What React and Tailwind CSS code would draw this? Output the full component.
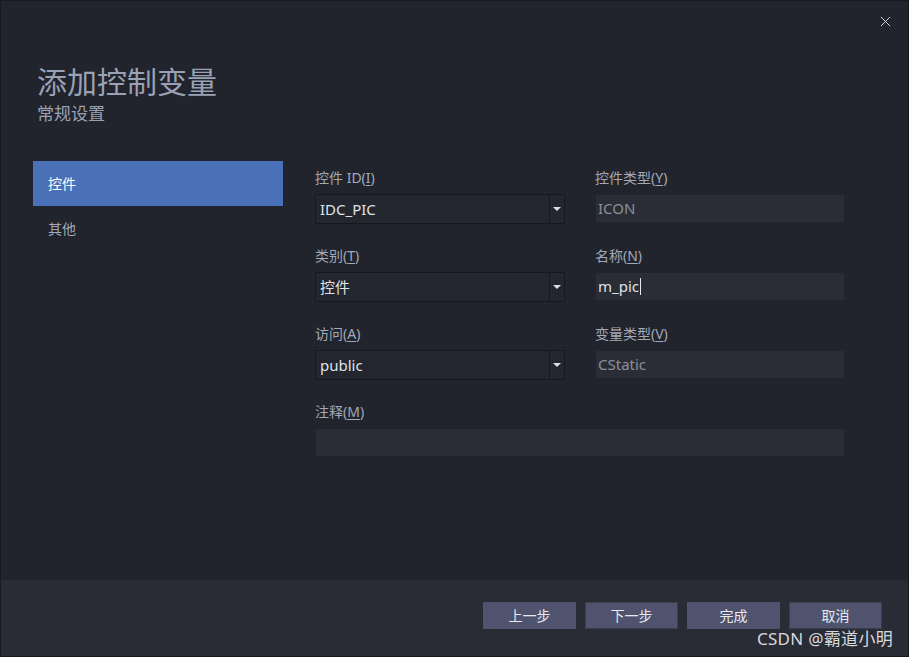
import { X } from 'lucide-react';

const font = { fontFamily: '"Segoe UI", "Noto Sans", "Noto Sans CJK SC", sans-serif' };

function Label({ text, hot }) {
  return (
    <div className="h-[22px] text-[14px] leading-[22px] text-[#a3a9b8]">
      {text}(<span className="underline underline-offset-2">{hot}</span>)
    </div>
  );
}

function Combo({ value }) {
  return (
    <div className="mt-[5px] flex h-[30px] w-[250px] border border-[#16181d] bg-[#23262e]">
      <div className="flex flex-1 items-center pl-[4px] text-[15px] text-[#dfe2e8]">{value}</div>
      <div className="flex w-[15px] items-center justify-center border-l border-[#16181d]">
        <div className="h-0 w-0 border-x-[4px] border-t-[4px] border-x-transparent border-t-[#dcdfe6]" />
      </div>
    </div>
  );
}

function ReadOnly({ value, w = 'w-[248px]', cursor }) {
  return (
    <div className={`mt-[6px] flex h-[27px] ${w} ml-[1px] items-center bg-[#2a2d36] pl-[2px] text-[15px] text-[#8b909c]`}>
      {value}
      {cursor && <span className="ml-[1px] h-[17px] w-[1px] bg-[#e6e8ee]" />}
    </div>
  );
}

function Btn({ label, bordered }) {
  return (
    <div className={`flex h-[27px] w-[93px] items-center justify-center bg-[#4f536e] text-[14px] text-[#e8e9ef] ${bordered ? 'border border-[#3b3e4b]' : ''}`}>
      {label}
    </div>
  );
}

export default function App() {
  return (
    <div style={font} className="flex h-[657px] w-[909px] flex-col overflow-hidden border border-[#17191e] bg-[#21242c]">
      <div className="flex justify-end pr-[14px] pt-[12px]">
        <X size={17} strokeWidth={1.4} className="text-[#cfd3dc]" />
      </div>

      <div className="pl-[36px] pt-[32px]">
        <div className="text-[30px] leading-[40px] text-[#9aa1b4]">添加控制变量</div>
        <div className="text-[17px] leading-[24px] text-[#9aa1b4]">常规设置</div>
      </div>

      <div className="flex flex-1 pt-[35px]">
        <div className="w-[282px] pl-[32px]">
          <div className="flex h-[45px] w-[250px] items-center bg-[#4a71b7] pl-[15px] text-[14px] text-white">控件</div>
          <div className="flex h-[45px] items-center pl-[15px] text-[14px] text-[#a3a9b8]">其他</div>
        </div>

        <div className="pl-[32px] pt-[6px]">
          <div className="grid grid-cols-[280px_250px] gap-y-[21px]">
            <div>
              <Label text="控件 ID" hot="I" />
              <Combo value="IDC_PIC" />
            </div>
            <div>
              <Label text="控件类型" hot="Y" />
              <ReadOnly value="ICON" />
            </div>
            <div>
              <Label text="类别" hot="T" />
              <Combo value="控件" />
            </div>
            <div>
              <Label text="名称" hot="N" />
              <ReadOnly value={<span className="text-[#dfe2e8]">m_pic</span>} cursor />
            </div>
            <div>
              <Label text="访问" hot="A" />
              <Combo value="public" />
            </div>
            <div>
              <Label text="变量类型" hot="V" />
              <ReadOnly value="CStatic" />
            </div>
            <div className="col-span-2">
              <Label text="注释" hot="M" />
              <ReadOnly value="" w="w-[528px]" />
            </div>
          </div>
        </div>
      </div>

      <div className="relative flex h-[76px] items-start justify-end gap-[9px] bg-[#292c35] pr-[26px] pt-[22px]">
        <Btn label="上一步" />
        <Btn label="下一步" bordered />
        <Btn label="完成" />
        <Btn label="取消" bordered />
        <div className="absolute bottom-[5px] right-[15px] text-[17px] tracking-[0.3px] text-[#d8d9de]">CSDN @霸道小明</div>
      </div>
    </div>
  );
}
